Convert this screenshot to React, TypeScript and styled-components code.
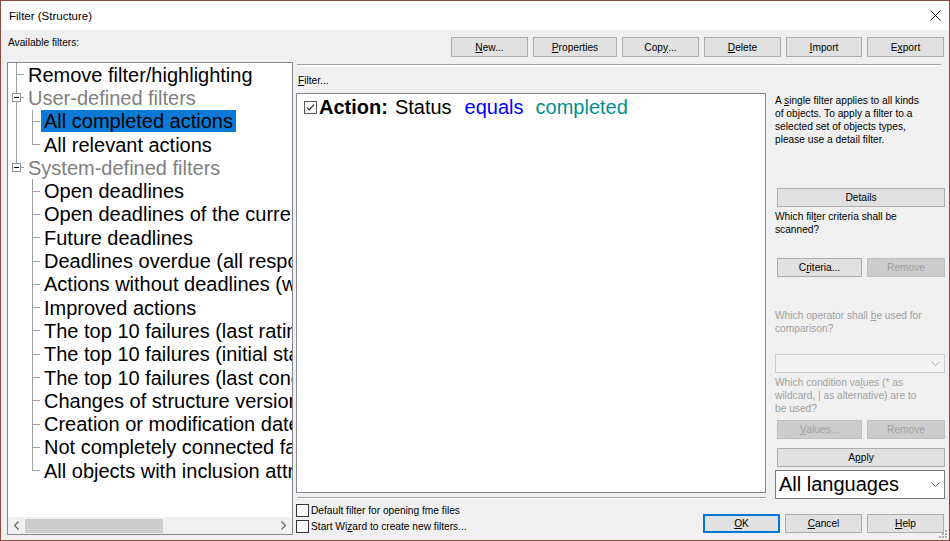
import React from "react";
import styled, { createGlobalStyle } from "styled-components";

const GlobalStyle = createGlobalStyle`
  html, body { margin: 0; padding: 0; background: #f0f0f0; }
  body { font-family: "Liberation Sans", Arial, sans-serif; color: #000; }
  * { box-sizing: border-box; }
`;

const LINE = "#a0a0a0";

const Window = styled.div`
  width: 950px;
  height: 541px;
  border: 1px solid #8d4a3e;
  display: flex;
  flex-direction: column;
  background: #f0f0f0;
  position: relative;
  overflow: hidden;
`;

const TitleBar = styled.div`
  height: 29px;
  flex: none;
  background: #fff;
  display: flex;
  align-items: center;
  justify-content: space-between;
  padding: 0 8px 0 8px;
  font-size: 11.5px;
`;

const Body = styled.div`
  flex: 1;
  min-height: 0;
  display: flex;
  gap: 3px;
  padding: 0 3px 5px 6px;
`;

const LeftCol = styled.div`
  width: 286px;
  flex: none;
  display: flex;
  flex-direction: column;
  padding-top: 6px;
`;

const Caption = styled.div`
  font-size: 10.2px;
  line-height: 13px;
  height: 13px;
  padding-left: 1px;
  white-space: nowrap;
`;

const TreePanel = styled.div`
  margin-top: 13px;
  flex: 1;
  min-height: 0;
  border: 1px solid #828790;
  background: #fff;
  display: flex;
  flex-direction: column;
`;

const TreeList = styled.div`
  flex: 1;
  min-height: 0;
  overflow: hidden;
  white-space: nowrap;
`;

const Row = styled.div`
  display: flex;
  align-items: center;
  height: 23.3px;
`;

type LineKind = "full" | "half" | "none";

const vLine = (k: LineKind) =>
  k === "full"
    ? `linear-gradient(${LINE}, ${LINE}) 8px 0 / 1px 100% no-repeat`
    : k === "half"
    ? `linear-gradient(${LINE}, ${LINE}) 8px 0 / 1px 50% no-repeat`
    : "";

const Cell = styled.span<{ $line: LineKind; $tick?: boolean }>`
  width: 16px;
  height: 100%;
  flex: none;
  display: flex;
  align-items: center;
  justify-content: center;
  background: ${(p) =>
    [p.$tick ? `linear-gradient(${LINE}, ${LINE}) 8px 50% / 8px 1px no-repeat` : "", vLine(p.$line)]
      .filter(Boolean)
      .join(", ") || "none"};
`;

const Label = styled.span<{ $group?: boolean; $selected?: boolean }>`
  margin-left: 1px;
  padding: 0 3px;
  height: 22px;
  line-height: 22px;
  font-size: 20px;
  color: ${(p) => (p.$group ? "#808080" : "#000")};
  background: ${(p) => (p.$selected ? "#0a7ad6" : "transparent")};
`;

const HScroll = styled.div`
  height: 17px;
  flex: none;
  display: flex;
  background: #f0f0f0;
`;

const ScrollArrow = styled.span`
  width: 17px;
  flex: none;
  display: flex;
  align-items: center;
  justify-content: center;
`;

const ScrollTrack = styled.div`
  flex: 1;
  display: flex;
  align-items: center;
`;

const ScrollThumb = styled.div`
  width: 138px;
  height: 14px;
  background: #cdcdcd;
`;

const RightCol = styled.div`
  flex: 1;
  min-width: 0;
  display: flex;
  flex-direction: column;
  padding-top: 7px;
`;

const Toolbar = styled.div`
  display: flex;
  justify-content: flex-end;
  gap: 5px;
  padding-right: 2px;
`;

type BtnVariant = "normal" | "disabled" | "default";

const Btn = styled.div<{ $w?: number; $h?: number; $variant?: BtnVariant }>`
  width: ${(p) => (p.$w ? `${p.$w}px` : "auto")};
  height: ${(p) => p.$h ?? 19}px;
  display: flex;
  align-items: center;
  justify-content: center;
  font-size: 10.2px;
  white-space: nowrap;
  color: ${(p) => (p.$variant === "disabled" ? "#a0a0a0" : "#000")};
  background: ${(p) => (p.$variant === "disabled" ? "#cccccc" : "#e1e1e1")};
  border: 1px solid
    ${(p) => (p.$variant === "disabled" ? "#bfbfbf" : p.$variant === "default" ? "#0078d7" : "#adadad")};
  box-shadow: ${(p) => (p.$variant === "default" ? "inset 0 0 0 1px #0078d7" : "none")};
`;

const Acc = styled.span`
  text-decoration: underline;
  text-underline-offset: 1px;
`;

const Rule = styled.div<{ $mt: number; $mr?: number }>`
  height: 2px;
  flex: none;
  border-top: 1px solid #a0a0a0;
  border-bottom: 1px solid #fff;
  margin: ${(p) => p.$mt}px ${(p) => p.$mr ?? 0}px 0 1px;
`;

const MainGrid = styled.div`
  display: grid;
  grid-template-columns: 470px 1fr;
  column-gap: 9px;
`;

const FilterCol = styled.div`
  display: flex;
  flex-direction: column;
`;

const FilterCaption = styled.div`
  margin-top: 8px;
  height: 13px;
  line-height: 13px;
  font-size: 10.2px;
  padding-left: 2px;
`;

const FilterBox = styled.div`
  margin-top: 6px;
  height: 400px;
  background: #fff;
  border: 1px solid #828790;
  padding: 2px 7px;
`;

const Clause = styled.div`
  display: flex;
  align-items: center;
  height: 23px;
  font-size: 20px;
  white-space: nowrap;
`;

const Word = styled.span<{ $color?: string; $bold?: boolean; $ml?: number }>`
  color: ${(p) => p.$color ?? "#000"};
  font-weight: ${(p) => (p.$bold ? 700 : 400)};
  margin-left: ${(p) => p.$ml ?? 0}px;
`;

const SidePanel = styled.div`
  padding-top: 28px;
  padding-right: 1px;
  display: flex;
  flex-direction: column;
`;

const Note = styled.div<{ $mt?: number; $disabled?: boolean }>`
  margin-top: ${(p) => p.$mt ?? 0}px;
  font-size: 10.2px;
  line-height: 13px;
  white-space: nowrap;
  color: ${(p) => (p.$disabled ? "#a0a0a0" : "#000")};
`;

const BtnRow = styled.div<{ $mt: number; $split?: boolean }>`
  margin-top: ${(p) => p.$mt}px;
  padding-left: 2px;
  display: grid;
  grid-template-columns: ${(p) => (p.$split ? "85px 1fr" : "1fr")};
  gap: 5px;
`;

const Combo = styled.div<{ $mt: number; $h: number; $disabled?: boolean }>`
  margin-top: ${(p) => p.$mt}px;
  height: ${(p) => p.$h}px;
  display: flex;
  align-items: center;
  justify-content: space-between;
  padding: 0 4px 0 3px;
  background: ${(p) => (p.$disabled ? "#f3f3f3" : "#fff")};
  border: 1px solid ${(p) => (p.$disabled ? "#cccccc" : "#7a7a7a")};
  font-size: 20px;
`;

const Footer = styled.div`
  display: flex;
  justify-content: space-between;
  align-items: flex-end;
  padding-top: 5px;
  padding-right: 2px;
`;

const CheckList = styled.div`
  display: flex;
  flex-direction: column;
  gap: 3px;
`;

const CheckRow = styled.div`
  display: flex;
  align-items: center;
  height: 13px;
  font-size: 10.2px;
  white-space: nowrap;
`;

const CheckBox = styled.span`
  width: 13px;
  height: 13px;
  flex: none;
  background: #fff;
  border: 1px solid #333;
  margin-right: 2px;
`;

const DialogButtons = styled.div`
  display: flex;
  gap: 5px;
`;

const Grip = styled.svg`
  position: absolute;
  right: 1px;
  bottom: 1px;
`;

const Chevron = ({ color = "#606060", dir = "down" }: { color?: string; dir?: "down" | "left" | "right" }) => {
  if (dir === "down")
    return (
      <svg width="9" height="5" viewBox="0 0 9 5">
        <path d="M0.5 0.5 L4.5 4.5 L8.5 0.5" fill="none" stroke={color} strokeWidth="1" />
      </svg>
    );
  const d = dir === "left" ? "M4.5 0.5 L0.5 4.5 L4.5 8.5" : "M0.5 0.5 L4.5 4.5 L0.5 8.5";
  return (
    <svg width="5" height="9" viewBox="0 0 5 9">
      <path d={d} fill="none" stroke={color} strokeWidth="1.2" />
    </svg>
  );
};

const Minus = () => (
  <svg width="9" height="9" viewBox="0 0 9 9">
    <rect x="0.5" y="0.5" width="8" height="8" fill="#fff" stroke="#919191" />
    <line x1="2" y1="4.5" x2="7" y2="4.5" stroke="#000" />
  </svg>
);

const CheckedIcon = () => (
  <svg width="13" height="13" viewBox="0 0 13 13">
    <rect x="0.5" y="0.5" width="12" height="12" fill="#fff" stroke="#5a5a5a" />
    <path d="M2.8 6.6 L5.2 9 L10 3.6" fill="none" stroke="#222" strokeWidth="1.2" />
  </svg>
);

type Node = {
  text: string;
  level: 0 | 1;
  group?: boolean;
  last?: boolean;
  selected?: boolean;
  parentContinues?: boolean;
};

const nodes: Node[] = [
  { text: "Remove filter/highlighting", level: 0 },
  { text: "User-defined filters", level: 0, group: true },
  { text: "All completed actions", level: 1, selected: true, parentContinues: true },
  { text: "All relevant actions", level: 1, last: true, parentContinues: true },
  { text: "System-defined filters", level: 0, group: true, last: true },
  { text: "Open deadlines", level: 1 },
  { text: "Open deadlines of the current user", level: 1 },
  { text: "Future deadlines", level: 1 },
  { text: "Deadlines overdue (all responsibilities)", level: 1 },
  { text: "Actions without deadlines (with responsible)", level: 1 },
  { text: "Improved actions", level: 1 },
  { text: "The top 10 failures (last rating)", level: 1 },
  { text: "The top 10 failures (initial state)", level: 1 },
  { text: "The top 10 failures (last condition)", level: 1 },
  { text: "Changes of structure versions", level: 1 },
  { text: "Creation or modification date", level: 1 },
  { text: "Not completely connected failures", level: 1 },
  { text: "All objects with inclusion attribute", level: 1, last: true },
];

const TreeRow = ({ node }: { node: Node }) => (
  <Row>
    {node.level === 1 && <Cell $line={node.parentContinues ? "full" : "none"} />}
    <Cell $line={node.last ? "half" : "full"} $tick>
      {node.group && <Minus />}
    </Cell>
    <Label $group={node.group} $selected={node.selected}>
      {node.text}
    </Label>
  </Row>
);

export default function App() {
  return (
    <>
      <GlobalStyle />
      <Window>
        <TitleBar>
          <span>Filter (Structure)</span>
          <svg width="11" height="11" viewBox="0 0 11 11">
            <path d="M0.5 0.5 L10.5 10.5 M10.5 0.5 L0.5 10.5" stroke="#111" strokeWidth="1" />
          </svg>
        </TitleBar>
        <Body>
          <LeftCol>
            <Caption>Available filters:</Caption>
            <TreePanel>
              <TreeList>
                {nodes.map((n) => (
                  <TreeRow key={n.text} node={n} />
                ))}
              </TreeList>
              <HScroll>
                <ScrollArrow>
                  <Chevron dir="left" />
                </ScrollArrow>
                <ScrollTrack>
                  <ScrollThumb />
                </ScrollTrack>
                <ScrollArrow>
                  <Chevron dir="right" />
                </ScrollArrow>
              </HScroll>
            </TreePanel>
          </LeftCol>
          <RightCol>
            <Toolbar>
              <Btn $w={77} $h={20}>
                <Acc>N</Acc>ew...
              </Btn>
              <Btn $w={84} $h={20}>
                <Acc>P</Acc>roperties
              </Btn>
              <Btn $w={77} $h={20}>
                Cop<Acc>y</Acc>...
              </Btn>
              <Btn $w={77} $h={20}>
                <Acc>D</Acc>elete
              </Btn>
              <Btn $w={76} $h={20}>
                <Acc>I</Acc>mport
              </Btn>
              <Btn $w={77} $h={20}>
                E<Acc>x</Acc>port
              </Btn>
            </Toolbar>
            <Rule $mt={7} $mr={5} />
            <MainGrid>
              <FilterCol>
                <FilterCaption>
                  <Acc>F</Acc>ilter...
                </FilterCaption>
                <FilterBox>
                  <Clause>
                    <CheckedIcon />
                    <Word $bold $ml={2}>
                      Action:
                    </Word>
                    <Word $ml={7}>Status</Word>
                    <Word $color="#0000ff" $ml={13}>
                      equals
                    </Word>
                    <Word $color="#009090" $ml={12}>
                      completed
                    </Word>
                  </Clause>
                </FilterBox>
                <Rule $mt={4} />
              </FilterCol>
              <SidePanel>
                <Note>
                  A <Acc>s</Acc>ingle filter applies to all kinds
                  <br />
                  of objects. To apply a filter to a
                  <br />
                  selected set of objects types,
                  <br />
                  please use a detail filter.
                </Note>
                <BtnRow $mt={42}>
                  <Btn>Details</Btn>
                </BtnRow>
                <Note $mt={3}>
                  Which fil<Acc>t</Acc>er criteria shall be
                  <br />
                  scanned?
                </Note>
                <BtnRow $mt={22} $split>
                  <Btn>
                    C<Acc>r</Acc>iteria...
                  </Btn>
                  <Btn $variant="disabled">Remove</Btn>
                </BtnRow>
                <Note $mt={32} $disabled>
                  Which operator shall <Acc>b</Acc>e used for
                  <br />
                  comparison?
                </Note>
                <Combo $mt={19} $h={19} $disabled>
                  <span />
                  <Chevron color="#b5b5b5" />
                </Combo>
                <Note $mt={3} $disabled>
                  Which condition va<Acc>l</Acc>ues (* as
                  <br />
                  wildcard, | as alternative) are to
                  <br />
                  be used?
                </Note>
                <BtnRow $mt={5} $split>
                  <Btn $variant="disabled">
                    <Acc>V</Acc>alues...
                  </Btn>
                  <Btn $variant="disabled">Remove</Btn>
                </BtnRow>
                <BtnRow $mt={9}>
                  <Btn>
                    A<Acc>p</Acc>ply
                  </Btn>
                </BtnRow>
                <Combo $mt={3} $h={29}>
                  <span>All languages</span>
                  <Chevron />
                </Combo>
              </SidePanel>
            </MainGrid>
            <Footer>
              <CheckList>
                <CheckRow>
                  <CheckBox />
                  Default filter for openin<Acc>g</Acc>&nbsp;fme files
                </CheckRow>
                <CheckRow>
                  <CheckBox />
                  Start Wi<Acc>z</Acc>ard to create new filters...
                </CheckRow>
              </CheckList>
              <DialogButtons>
                <Btn $w={77} $variant="default">
                  <Acc>O</Acc>K
                </Btn>
                <Btn $w={77}>
                  <Acc>C</Acc>ancel
                </Btn>
                <Btn $w={77}>
                  <Acc>H</Acc>elp
                </Btn>
              </DialogButtons>
            </Footer>
          </RightCol>
        </Body>
        <Grip width="10" height="10" viewBox="0 0 10 10">
          <rect x="7" y="1" width="2" height="2" fill="#b0b0b0" />
          <rect x="4" y="4" width="2" height="2" fill="#b0b0b0" />
          <rect x="7" y="4" width="2" height="2" fill="#b0b0b0" />
          <rect x="1" y="7" width="2" height="2" fill="#b0b0b0" />
          <rect x="4" y="7" width="2" height="2" fill="#b0b0b0" />
          <rect x="7" y="7" width="2" height="2" fill="#b0b0b0" />
        </Grip>
      </Window>
    </>
  );
}
